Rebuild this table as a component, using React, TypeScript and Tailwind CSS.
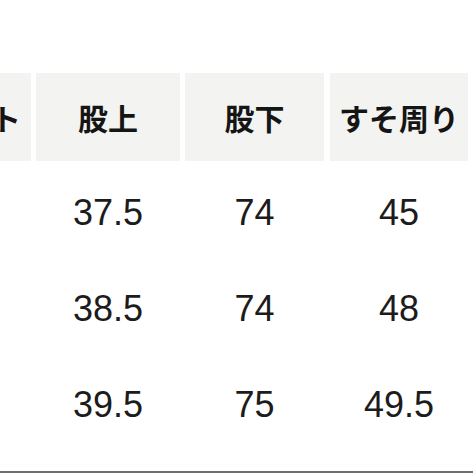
import React from "react";

const headers = ["ウエスト", "股上", "股下", "すそ周り"];
const rows = [
  ["", "37.5", "74", "45"],
  ["", "38.5", "74", "48"],
  ["", "39.5", "75", "49.5"],
];

export default function App() {
  return (
    <div className="w-[473px] h-[473px] overflow-hidden bg-white flex flex-col">
      <div className="pt-[73px] ml-[-109px]">
        <div className="grid grid-cols-[140px_144px_139px_139px] gap-x-[5px] gap-y-[8px] auto-rows-[88px]">
          {headers.map((h, i) => (
            <div
              key={h}
              className={`bg-[#f3f3f1] flex items-center justify-center text-[30px] font-bold text-[#151515] leading-none ${i === 3 ? "ml-[1px]" : ""}`}
              style={{ fontFamily: '"Noto Sans CJK JP", "Noto Sans", sans-serif' }}
            >
              {h}
            </div>
          ))}
          {rows.map((r, ri) =>
            r.map((c, ci) => (
              <div
                key={`${ri}-${ci}`}
                className={`flex items-center justify-center text-[36px] text-[#1c1c1c] leading-none ${ci === 3 ? "ml-[1px]" : ""}`}
                style={{ fontFamily: '"Liberation Sans", Arial, sans-serif' }}
              >
                {c}
              </div>
            ))
          )}
        </div>
      </div>
      <div className="mt-auto h-[2px] w-full bg-[#6e6e6e]" />
    </div>
  );
}
